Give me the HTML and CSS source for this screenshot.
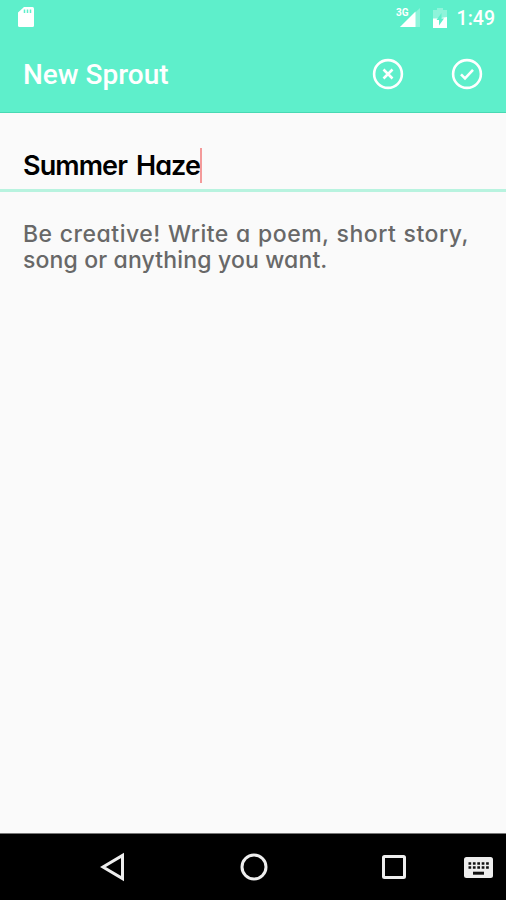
FILE: index.html
```html
<!DOCTYPE html>
<html lang="en">
<head>
    <meta charset="UTF-8">
    <meta name="viewport" content="width=device-width, initial-scale=1.0">
    <title>New Sprout</title>
    <link rel="stylesheet" href="styles.css">
</head>
<body>

<!-- Status bar -->
<div class="status-bar">
    <svg class="sd-card" width="16" height="20" viewBox="0 0 16 20">
        <path fill="#fff" d="M6 0h8.500a1.500 1.500 0 0 1 1.500 1.500v17a1.500 1.500 0 0 1-1.500 1.500h-13a1.500 1.500 0 0 1-1.500-1.500V5.500z"/>
        <path stroke="#5eefcb" stroke-width="1.500" d="M6.500 2.500v3.500M9.500 2.500v3.500M12.500 2.500v3.500"/>
    </svg>
    <span class="network">3G</span>
    <svg class="signal" width="20" height="19" viewBox="0 0 20 19">
        <path fill="#fff" opacity=".3" d="M20 0v19H0z"/>
        <path fill="#fff" d="M15.500 3.500v15.500H0z"/>
    </svg>
    <svg class="battery" width="14" height="20" viewBox="0 0 14 20">
        <path fill="#fff" opacity=".3" d="M4 0h6v2h4v9H0V2h4z"/>
        <path fill="#fff" d="M0 10.500h5L14 9v11H0z"/>
        <path fill="#5eefcb" d="M8.500 5v5.500H11L6 17.500v-5.500H3.500z"/>
    </svg>
    <span class="clock">1:49</span>
</div>

<!-- App bar -->
<div class="app-bar">
    <h1 class="title">New Sprout</h1>
    <button class="action" aria-label="Cancel">
        <svg width="32" height="32" viewBox="0 0 32 32">
            <circle cx="16" cy="16" r="13.900"/>
            <path d="M11.500 11.500l9 9M20.500 11.500l-9 9"/>
        </svg>
    </button>
    <button class="action" aria-label="Save">
        <svg width="32" height="32" viewBox="0 0 32 32">
            <circle cx="16" cy="16" r="13.900"/>
            <path d="M10 16.300l4 4 8-8.500"/>
        </svg>
    </button>
</div>

<!-- Editor -->
<div class="editor">
    <div class="sprout-title"><span>Summer Haze</span><span class="cursor"></span></div>
    <div class="sprout-body">
        <div class="line first">Be creative! Write a poem, short story,</div>
        <div class="line second">song or anything you want.</div>
    </div>
</div>

<!-- Navigation bar -->
<div class="nav-bar">
    <svg class="back" width="28" height="32" viewBox="0 0 28 32">
        <path d="M23.500 4.500v23L4 16z"/>
    </svg>
    <svg class="home" width="30" height="32" viewBox="0 0 30 32">
        <circle cx="15" cy="16" r="12"/>
    </svg>
    <svg class="recent" width="28" height="32" viewBox="0 0 28 32">
        <rect x="3.500" y="5.500" width="21" height="21" rx="1"/>
    </svg>
    <svg class="keyboard" width="29" height="21" viewBox="0 0 29 21">
        <rect fill="#eee" width="29" height="21" rx="2.500"/>
        <path stroke="#111" stroke-width="2.500" stroke-dasharray="2.700 1.700" d="M4.500 6.500h20.300M4.500 10.500h20.300"/>
        <path stroke="#111" stroke-width="3" d="M9 16.200h11"/>
    </svg>
</div>

</body>
</html>
```
FILE: styles.css
```css
* {
    box-sizing: border-box;
}

body {
    margin: 0;
    height: 100vh;
    display: flex;
    flex-direction: column;
    background-color: #fafafa;
    font-family: Roboto, sans-serif;
    overflow: hidden;
}

.status-bar {
    height: 36px;
    display: flex;
    align-items: flex-start;
    padding: 7px 11px 0 18px;
    background-color: #5eefcb;
    color: #fff;
}

.network {
    margin: 1px -9px 0 auto;
    font-size: 10px;
    font-weight: bold;
    line-height: 10px;
}

.signal {
    margin-top: 1px;
}

.battery {
    margin: 1px 10px 0 13px;
}

.clock {
    font-size: 19.5px;
    font-weight: 500;
    line-height: 23px;
}

.app-bar {
    height: 77px;
    display: flex;
    align-items: center;
    gap: 47px;
    padding: 0 23px;
    background-color: #5eefcb;
    border-bottom: 1px solid #48d9b3;
}

.title {
    flex: 1;
    margin: 0;
    padding-top: 1px;
    color: #fff;
    font-size: 28px;
    font-weight: 500;
}

.action {
    width: 32px;
    height: 32px;
    padding: 0;
    border: none;
    background: none;
    cursor: pointer;
}

.action svg {
    display: block;
    fill: none;
    stroke: #fff;
    stroke-width: 2.6;
}

.editor {
    flex: 1;
    font-family: Inter, sans-serif;
    font-feature-settings: "cv11";
}

.sprout-title {
    height: 79px;
    display: flex;
    align-items: center;
    padding: 28px 23px 0;
    border-bottom: 3px solid #b8f3df;
    color: #000;
    font-size: 27px;
    font-weight: 600;
    letter-spacing: -0.9px;
    word-spacing: 3px;
}

.cursor {
    width: 2px;
    height: 35px;
    background-color: #f49a9a;
}

.sprout-body {
    padding: 29px 23px;
    color: #686868;
    font-size: 23px;
    font-weight: 500;
    line-height: 26px;
    white-space: nowrap;
}

.first {
    letter-spacing: 0.5px;
    word-spacing: 0.6px;
}

.second {
    letter-spacing: 0.15px;
}

.nav-bar {
    height: 67px;
    display: flex;
    align-items: center;
    padding: 0 13px 0 99px;
    background-color: #000;
    border-top: 1px solid #777;
}

.nav-bar svg {
    fill: none;
    stroke: #eee;
    stroke-width: 3;
}

.home {
    margin-left: 112px;
}

.recent {
    margin-left: 111px;
}

.nav-bar .keyboard {
    margin-left: auto;
    stroke: none;
}
```
